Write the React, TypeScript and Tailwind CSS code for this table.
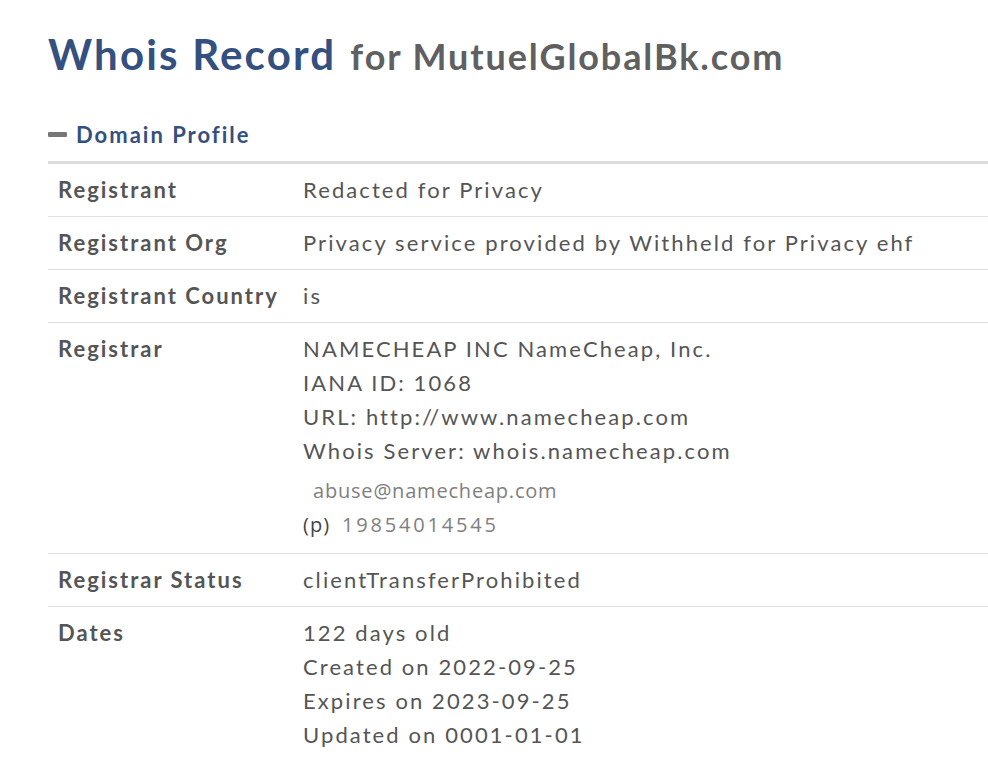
import React from "react";

const rows: { label: string; lines: string[]; contact?: boolean }[] = [
  { label: "Registrant", lines: ["Redacted for Privacy"] },
  { label: "Registrant Org", lines: ["Privacy service provided by Withheld for Privacy ehf"] },
  { label: "Registrant Country", lines: ["is"] },
  {
    label: "Registrar",
    lines: [
      "NAMECHEAP INC NameCheap, Inc.",
      "IANA ID: 1068",
      "URL: http://www.namecheap.com",
      "Whois Server: whois.namecheap.com",
    ],
    contact: true,
  },
  { label: "Registrar Status", lines: ["clientTransferProhibited"] },
  {
    label: "Dates",
    lines: ["122 days old", "Created on 2022-09-25", "Expires on 2023-09-25", "Updated on 0001-01-01"],
  },
];

export default function App() {
  return (
    <div className="min-h-[758px] w-[988px] bg-white pl-[48px]" style={{ fontFamily: "Lato, 'Open Sans', sans-serif" }}>
      <h1 className="mt-[29px] h-[50px] flex items-baseline whitespace-nowrap leading-[50px]">
        <span className="text-[42px] font-bold text-[#34507f] tracking-[2.2px]">Whois Record</span>
        <span className="ml-[14px] text-[36px] font-bold text-[#606060] tracking-[1.9px]">for MutuelGlobalBk.com</span>
      </h1>
      <div className="mt-[38px] flex items-center h-[34px]">
        <span className="inline-block w-[19px] h-[5px] bg-[#777] rounded-[1px] mr-[9px]" />
        <span className="text-[22px] font-bold text-[#34507f] tracking-[2px]">Domain Profile</span>
      </div>
      <div className="mt-[10px] border-t-[3px] border-[#dcdcdc]">
        {rows.map((r, i) => (
          <div
            key={r.label}
            className={`flex text-[22px] leading-[34px] tracking-[2.1px] text-[#555] ${i < rows.length - 1 ? "border-b border-[#e0e0e0]" : ""} ${r.contact ? "pt-[9px] pb-[11px]" : "pt-[9px] pb-[9px]"}`}
          >
            <div className="w-[255px] pl-[10px] font-bold shrink-0 whitespace-nowrap tracking-[2px]">{r.label}</div>
            <div className="flex flex-col whitespace-nowrap">
              {r.lines.map((l) => (
                <div key={l}>{l}</div>
              ))}
              {r.contact && (
                <div className="flex flex-col mt-[6px]" style={{ fontFamily: "'Open Sans', sans-serif" }}>
                  <div className="pl-[10px] text-[20px] leading-[34px] tracking-[0.8px] text-[#808080]">abuse@namecheap.com</div>
                  <div className="flex items-baseline leading-[34px]">
                    <span className="text-[20px] tracking-[1px] text-[#444]">(p)</span>
                    <span className="ml-[12px] text-[20px] tracking-[2.8px] text-[#808080]">19854014545</span>
                  </div>
                </div>
              )}
            </div>
          </div>
        ))}
      </div>
    </div>
  );
}
